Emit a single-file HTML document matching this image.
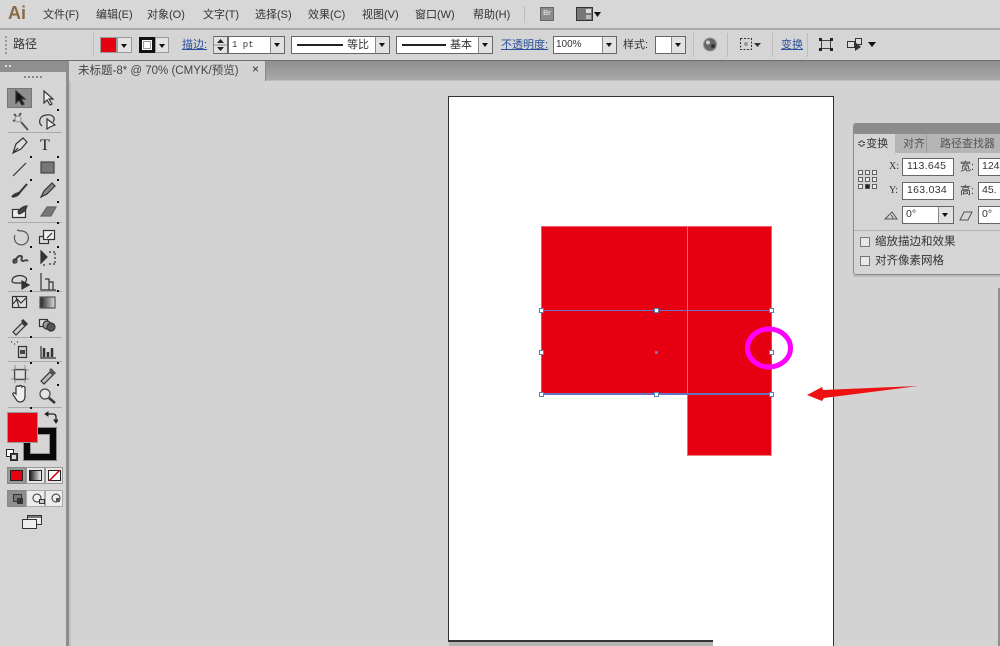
<!DOCTYPE html>
<html><head><meta charset="utf-8"><style>
html,body{margin:0;padding:0}
body{width:1000px;height:646px;overflow:hidden;position:relative;background:#d3d3d3;font-family:"Liberation Sans","Noto Sans CJK SC",sans-serif;color:#333}
.a{position:absolute}
.t{position:absolute;white-space:nowrap;font-size:11px;line-height:14px}
.f{position:absolute;background:#fff;border:1px solid #666;box-sizing:border-box}
.d{position:absolute;width:0;height:0;border-left:3.5px solid transparent;border-right:3.5px solid transparent;border-top:4px solid #111}
.btn{position:absolute;background:#e2e2e2;border:1px solid #666;box-sizing:border-box;border-left:1px solid #888}
.sep{position:absolute;width:1px;background:#bcbcbc}
.h{position:absolute;width:5px;height:5px;background:#fff;border:1px solid #5a7fb5;box-sizing:border-box}
.hs{position:absolute;height:1px;background:#aaa;left:8px;width:54px}
</style></head><body>

<!-- menu bar -->
<div class="a" style="left:0;top:0;width:1000px;height:28px;background:#d7d7d7"></div>
<div class="a" style="left:0;top:28px;width:1000px;height:2px;background:#a9a9a9"></div>
<div class="t" style="left:8px;top:3px;font-size:18px;line-height:20px;font-weight:bold;color:#8a6a48">Ai</div>
<div class="t" style="left:43px;top:8px">文件(F)</div>
<div class="t" style="left:96px;top:8px">编辑(E)</div>
<div class="t" style="left:147px;top:8px">对象(O)</div>
<div class="t" style="left:203px;top:8px">文字(T)</div>
<div class="t" style="left:255px;top:8px">选择(S)</div>
<div class="t" style="left:308px;top:8px">效果(C)</div>
<div class="t" style="left:362px;top:8px">视图(V)</div>
<div class="t" style="left:415px;top:8px">窗口(W)</div>
<div class="t" style="left:473px;top:8px">帮助(H)</div>
<div class="sep" style="left:524px;top:6px;height:17px"></div>
<div class="a" style="left:540px;top:7px;width:14px;height:14px;background:#8b8b8b;border:1px solid #666;box-sizing:border-box;font-size:7px;line-height:12px;text-align:center;color:#ddd;font-weight:bold">Br</div>
<svg class="a" style="left:576px;top:7px" width="26" height="15"><rect x="0.5" y="0.5" width="16" height="13" fill="#777" stroke="#333"/><rect x="10" y="2" width="5" height="4" fill="#ddd"/><rect x="10" y="8" width="5" height="4" fill="#bbb"/><path d="M18 5h7l-3.500 5z" fill="#111"/></svg>

<!-- control bar -->
<div class="a" style="left:0;top:30px;width:1000px;height:30px;background:#d5d5d5"></div>
<div class="a" style="left:0;top:60px;width:1000px;height:1px;background:#6f6f6f"></div>
<div class="a" style="left:5px;top:36px;width:2px;height:18px;border-left:2px dotted #999"></div>
<div class="t" style="left:13px;top:37px;font-size:12px">路径</div>
<div class="sep" style="left:93px;top:33px;height:24px"></div>
<div class="a" style="left:100px;top:37px;width:17px;height:16px;background:#e60012;border:1px solid #999;box-sizing:border-box"></div>
<div class="btn" style="left:117px;top:37px;width:15px;height:16px;border-color:#999"></div><div class="d" style="left:121px;top:44px"></div>
<div class="a" style="left:139px;top:37px;width:16px;height:16px;background:#fff;border:3px solid #111;box-sizing:border-box;outline:1px solid #999;outline-offset:-5px"></div>
<div class="btn" style="left:155px;top:37px;width:14px;height:16px;border-color:#999"></div><div class="d" style="left:159px;top:44px"></div>
<div class="t" style="left:182px;top:38px;color:#2a4f9a;text-decoration:underline">描边:</div>
<div class="btn" style="left:213px;top:36px;width:15px;height:18px"></div>
<svg class="a" style="left:213px;top:36px" width="15" height="18"><path d="M4 7l3.500-4 3.500 4zM4 11l3.500 4 3.500-4z" fill="#222"/><path d="M1 9h13" stroke="#888"/></svg>
<div class="f" style="left:228px;top:36px;width:57px;height:18px"></div>
<div class="t" style="left:232px;top:38px;font-family:'Liberation Mono',monospace;font-size:9px">1 pt</div>
<div class="btn" style="left:270px;top:36px;width:15px;height:18px"></div><div class="d" style="left:274px;top:43px"></div>
<div class="f" style="left:291px;top:36px;width:85px;height:18px"></div>
<div class="a" style="left:297px;top:44px;width:46px;height:2px;background:#222"></div>
<div class="t" style="left:347px;top:38px">等比</div>
<div class="btn" style="left:375px;top:36px;width:15px;height:18px"></div><div class="d" style="left:379px;top:43px"></div>
<div class="f" style="left:396px;top:36px;width:83px;height:18px"></div>
<div class="a" style="left:402px;top:44px;width:44px;height:2px;background:#222"></div>
<div class="t" style="left:450px;top:38px">基本</div>
<div class="btn" style="left:478px;top:36px;width:15px;height:18px"></div><div class="d" style="left:482px;top:43px"></div>
<div class="t" style="left:501px;top:38px;color:#2a4f9a;text-decoration:underline">不透明度:</div>
<div class="f" style="left:553px;top:36px;width:50px;height:18px"></div>
<div class="t" style="left:556px;top:38px;font-size:10px">100%</div>
<div class="btn" style="left:602px;top:36px;width:15px;height:18px"></div><div class="d" style="left:606px;top:43px"></div>
<div class="t" style="left:623px;top:38px">样式:</div>
<div class="f" style="left:655px;top:36px;width:17px;height:18px"></div>
<div class="btn" style="left:671px;top:36px;width:15px;height:18px"></div><div class="d" style="left:675px;top:43px"></div>
<div class="sep" style="left:693px;top:33px;height:24px"></div>
<svg class="a" style="left:702px;top:36px" width="16" height="17"><circle cx="8" cy="8.500" r="6.500" fill="#666" stroke="#999"/><circle cx="6" cy="6.500" r="2" fill="#ccc"/><circle cx="11" cy="10" r="2" fill="#333"/></svg>
<div class="sep" style="left:727px;top:33px;height:24px"></div>
<svg class="a" style="left:738px;top:36px" width="26" height="16"><rect x="2.500" y="2.500" width="11" height="11" fill="none" stroke="#333" stroke-dasharray="2 1.500"/><circle cx="8" cy="8" r="2" fill="#999"/><path d="M16 7h7l-3.500 4z" fill="#333"/></svg>
<div class="sep" style="left:772px;top:33px;height:24px"></div>
<div class="t" style="left:781px;top:38px;color:#2a4f9a;text-decoration:underline">变换</div>
<div class="sep" style="left:807px;top:33px;height:24px"></div>
<svg class="a" style="left:818px;top:37px" width="16" height="15"><rect x="3.500" y="3.500" width="9" height="8" fill="none" stroke="#444"/><path d="M1 1h3v3H1zM12 1h3v3h-3zM1 11h3v3H1zM12 11h3v3h-3z" fill="#222"/></svg>
<svg class="a" style="left:846px;top:36px" width="32" height="17"><rect x="1.500" y="5.500" width="7" height="6" fill="#ddd" stroke="#333"/><rect x="9.500" y="2.500" width="6" height="6" fill="#ddd" stroke="#333"/><path d="M9 6l6 5-6 4z" fill="#333"/><path d="M22 6h8l-4 5z" fill="#111"/></svg>

<!-- tab bar -->
<div class="a" style="left:0;top:61px;width:1000px;height:19px;background:linear-gradient(#8e8e8e,#a9a9a9)"></div>
<div class="a" style="left:0;top:80px;width:1000px;height:1px;background:#bdbdbd"></div>
<div class="a" style="left:68px;top:61px;width:198px;height:20px;background:#d3d3d3;border-right:1px solid #888;box-sizing:border-box"></div>
<div class="t" style="left:78px;top:64px;font-size:11.500px;color:#444">未标题-8* @ 70% (CMYK/预览)</div>
<div class="t" style="left:252px;top:62px;font-size:12px;color:#333">×</div>

<!-- tool panel -->
<div class="a" style="left:0;top:61px;width:66px;height:585px;background:#d5d5d5"></div>
<div class="a" style="left:0;top:61px;width:66px;height:11px;background:#8f8f8f"></div>
<div class="a" style="left:5px;top:65px;width:6px;height:2px;border-top:2px dotted #ddd"></div>
<div class="a" style="left:24px;top:76px;width:18px;border-top:2px dotted #888"></div>
<div class="a" style="left:66px;top:61px;width:3px;height:585px;background:#8d8d8d"></div>
<div class="a" style="left:69px;top:81px;width:2px;height:565px;background:#c2c2c2"></div>

<div class="a" style="left:7px;top:88px;width:25px;height:20px;background:#8f8f8f;border:1px solid #777;box-sizing:border-box"></div>
<div class="hs" style="top:132px"></div><div class="hs" style="top:222px"></div><div class="hs" style="top:291px"></div><div class="hs" style="top:337px"></div><div class="hs" style="top:361px"></div><div class="hs" style="top:407px"></div>
<svg class="a" style="left:0;top:84px" width="66" height="450" fill="none" stroke="#333" stroke-width="1.200">
<path d="M16 7l0 12 3-3 3 5 2-1-3-5 4 0z" fill="#111"/>
<path d="M44 7l0 12 3-3 3 5 2-1-3-5 4 0z" fill="#eee"/>
<path d="M14 30l2 2M21 29l-2 3M13 37l3-1M21 38l7 8" stroke="#555" stroke-width="2"/><circle cx="18" cy="35" r="3" fill="#ddd" stroke="#999"/>
<path d="M42 42c-4-3-3-10 4-11 7-1 10 3 7 7" /><path d="M47 35v10l3-2 5-2z" fill="#eee"/>
<path d="M13 69l3-9 7-6 4 4-6 7z" fill="#ddd"/><path d="M13 69l5-5"/>
<text x="40" y="66" font-family="Liberation Serif" font-size="16" fill="#222" stroke="none">T</text>
<path d="M13 92l13-13"/><rect x="41" y="78" width="13" height="11" fill="#777" stroke="#444"/>
<path d="M12 113c4-5 7-3 8-5l7-8" stroke-width="2"/><path d="M12 113c3 0 6-1 8-4" fill="#333"/>
<path d="M41 113l3-6 8-8 3 3-8 8z" fill="#888"/>
<rect x="12.500" y="125.500" width="13" height="8" fill="#eee"/><path d="M18 128c2-4 6-6 9-6-1 4-4 7-8 8z" fill="#444"/>
<path d="M41 132l6-9h9l-5 9z" fill="#777" stroke="#666"/>
<path d="M15 151a7 7 0 1 0 5-4l-3-1" stroke="#555"/>
<rect x="39.500" y="152.500" width="9" height="7" fill="#ddd"/><rect x="43.500" y="146.500" width="11" height="9" fill="#eee"/><path d="M47 154l5-5"/>
<path d="M13 179c3-2 4-8 8-7 3 1-2 4 2 5 2 0 3-2 5 0" stroke-width="2" stroke="#444"/><circle cx="15" cy="177" r="2"/>
<path d="M41 167v12l6-6z" fill="#333"/><path d="M49 168h7M49 180h7M55 169v10M43 181h2" stroke-dasharray="2 2"/>
<path d="M12 197c0-5 8-7 13-4 3 2 1 6-2 6H16c-3 0-4-1-4-2z" /><path d="M22 197v8l7-4z" fill="#333"/>
<path d="M41 189v17h15M45 195h4v11M49 198h4v8"/>
<rect x="12.500" y="212.500" width="14" height="11" fill="#ddd"/><path d="M13 220l4-5 4 4 5-5M16 213l3 10"/>
<rect x="40" y="213" width="15" height="11" fill="url(#g)" stroke="#555"/>
<path d="M13 248l9-9 3 3-9 9z" fill="#ccc"/><path d="M22 236l5 5" stroke-width="3"/>
<rect x="39.500" y="235.500" width="8" height="7" fill="#ddd"/><circle cx="47" cy="241" r="4" fill="#999"/><circle cx="51" cy="243" r="4" fill="#555"/>
<rect x="18.500" y="262.500" width="8" height="11" fill="#ccc"/><rect x="20" y="266" width="5" height="4" fill="#444" stroke="none"/><path d="M11 258h2M14 260h2M17 258h2" stroke-dasharray="1 1"/>
<path d="M41 262v12h15" /><path d="M44 264v9M48 268v5M52 264v9" stroke-width="2.500"/>
<rect x="14.500" y="285.500" width="11" height="10" fill="#ddd"/><path d="M11 286h18M11 295h18M15 281v18M25 281v18" stroke="#777" stroke-width=".7"/>
<path d="M41 297l9-9 3 3-9 9z" fill="#bbb"/><path d="M50 285l5 5" stroke-width="3" stroke="#555"/>
<path d="M14 312c-3-3 0-4 2-2v-7c1-2 3-1 3 0 0-2 3-2 3 0 1-1 3-1 3 1v8c0 4-2 6-5 6s-4-3-6-6z" fill="#eee"/>
<circle cx="45" cy="310" r="5" fill="#e4e4e4" stroke="#444"/><path d="M49 314l6 5" stroke-width="2.500" stroke="#333"/>
<path d="M57 25h2v2h-2zM30 72h2v2h-2zM57 72h2v2h-2zM30 95h2v2h-2zM57 95h2v2h-2zM57 117h2v2h-2zM57 138h2v2h-2zM30 162h2v2h-2zM57 162h2v2h-2zM30 184h2v2h-2zM30 206h2v2h-2zM57 206h2v2h-2zM30 252h2v2h-2zM30 278h2v2h-2zM57 278h2v2h-2zM57 300h2v2h-2zM30 323h2v2h-2z" fill="#111" stroke="none"/>
<defs><linearGradient id="g"><stop offset="0" stop-color="#222"/><stop offset="1" stop-color="#ddd"/></linearGradient></defs>
</svg>

<!-- fill / stroke -->
<div class="a" style="left:24px;top:428px;width:32px;height:32px;box-sizing:border-box;border:6px solid #0a0a0a;outline:1px solid #888;background:#d5d5d5"></div>
<div class="a" style="left:30px;top:434px;width:20px;height:20px;box-sizing:border-box;border:1px solid #999"></div>
<div class="a" style="left:7px;top:412px;width:31px;height:31px;background:#e60012;border:1px solid #999;box-sizing:border-box"></div>
<svg class="a" style="left:44px;top:410px" width="14" height="14" fill="none" stroke="#222"><path d="M2 4h7c2 0 3 1 3 3v5" stroke-width="1.300"/><path d="M1 4l3-2v4zM12 13l-2-3h4z" fill="#222"/></svg>
<svg class="a" style="left:6px;top:449px" width="12" height="12"><rect x="0.500" y="0.500" width="7" height="7" fill="#fff" stroke="#222"/><rect x="4.500" y="4.500" width="7" height="7" fill="#444" stroke="#222"/><rect x="6" y="6" width="4" height="4" fill="#ddd"/></svg>

<div class="a" style="left:7px;top:467px;width:19px;height:17px;background:#9a9a9a;border:1px solid #888;box-sizing:border-box"></div>
<div class="a" style="left:10px;top:470px;width:13px;height:11px;background:#e60012;border:1px solid #222;box-sizing:border-box"></div>
<div class="a" style="left:26px;top:467px;width:19px;height:17px;background:#e5e5e5;border:1px solid #999;box-sizing:border-box"></div>
<div class="a" style="left:29px;top:470px;width:13px;height:11px;background:linear-gradient(90deg,#222,#eee);border:1px solid #222;box-sizing:border-box"></div>
<div class="a" style="left:45px;top:467px;width:18px;height:17px;background:#e5e5e5;border:1px solid #999;box-sizing:border-box"></div>
<svg class="a" style="left:48px;top:470px" width="13" height="11"><rect x="0.500" y="0.500" width="12" height="10" fill="#fff" stroke="#222"/><path d="M1 11L12 0" stroke="#c00" stroke-width="1.500"/></svg>

<div class="a" style="left:7px;top:490px;width:19px;height:17px;background:#8f8f8f;border:1px solid #888;box-sizing:border-box"></div>
<div class="a" style="left:26px;top:490px;width:19px;height:17px;background:#ececec;border:1px solid #aaa;box-sizing:border-box"></div>
<div class="a" style="left:45px;top:490px;width:18px;height:17px;background:#ececec;border:1px solid #aaa;box-sizing:border-box"></div>
<svg class="a" style="left:7px;top:490px" width="56" height="17" fill="none" stroke="#333"><rect x="6.500" y="4.500" width="8" height="7" fill="#777"/><rect x="10.500" y="8.500" width="5" height="5" fill="#333"/><circle cx="30" cy="8" r="4" fill="#eee"/><rect x="32.500" y="9.500" width="5" height="4" fill="#ccc"/><circle cx="49" cy="8" r="4" fill="#eee"/><path d="M49 8h4v4h-4z" fill="#555" stroke="none"/></svg>
<svg class="a" style="left:21px;top:514px" width="22" height="16" fill="#eee" stroke="#333"><rect x="6.500" y="1.500" width="14" height="9"/><rect x="1.500" y="5.500" width="14" height="9"/><path d="M7 2h13v2H7z" fill="#777" stroke="none"/></svg>

<!-- artboard -->
<div class="a" style="left:448px;top:96px;width:386px;height:546px;background:#fff;border:1px solid #333;box-sizing:border-box;border-bottom-width:2px"></div>
<div class="a" style="left:713px;top:640px;width:120px;height:6px;background:#fff"></div>
<div class="a" style="left:833px;top:96px;width:1px;height:550px;background:#333"></div>
<div class="a" style="left:449px;top:642px;width:264px;height:4px;background:#b5b5b5"></div>

<!-- shapes -->
<div class="a" style="left:541px;top:226px;width:231px;height:169px;background:#e60012"></div>
<div class="a" style="left:687px;top:226px;width:85px;height:230px;background:#e60012;border-left:1px solid #ee6a72;border-right:1px solid #f0a0a5;border-bottom:1px solid #ee8088;box-sizing:border-box"></div>
<div class="a" style="left:541px;top:226px;width:231px;height:1px;background:#ee5a64"></div>
<div class="a" style="left:541px;top:226px;width:1px;height:85px;background:#ee5a64"></div>
<div class="a" style="left:771px;top:226px;width:1px;height:85px;background:#ee6a72"></div>

<!-- selection -->
<div class="a" style="left:541px;top:310px;width:231px;height:85px;border:1px solid #6a70c0;box-sizing:border-box;border-bottom-width:2px"></div>
<div class="h" style="left:539px;top:308px"></div><div class="h" style="left:654px;top:308px"></div><div class="h" style="left:769px;top:308px"></div>
<div class="h" style="left:539px;top:350px"></div><div class="h" style="left:769px;top:350px"></div>
<div class="h" style="left:539px;top:392px"></div><div class="h" style="left:654px;top:392px"></div><div class="h" style="left:769px;top:392px"></div>
<div class="a" style="left:655px;top:351px;width:3px;height:3px;background:#8a6ab0"></div>

<svg class="a" style="left:740px;top:320px" width="60" height="56"><ellipse cx="29" cy="28" rx="21.500" ry="19" fill="none" stroke="#ff00ff" stroke-width="5"/></svg>
<svg class="a" style="left:800px;top:380px" width="120" height="26"><path d="M7 15L22 7l1 3L118 6 24 18l-2 3z" fill="#ee1111"/></svg>

<!-- transform panel -->
<div class="a" style="left:853px;top:123px;width:147px;height:152px;background:#d5d5d5;border:1px solid #8a8a8a;border-right:0;box-sizing:border-box;border-radius:3px 0 0 3px"></div>
<div class="a" style="left:854px;top:124px;width:146px;height:10px;background:#8c8c8c;border-radius:2px 0 0 0"></div>
<div class="a" style="left:854px;top:134px;width:146px;height:19px;background:#b5b5b5"></div>
<div class="a" style="left:854px;top:134px;width:41px;height:19px;background:#d5d5d5"></div>
<div class="a" style="left:926px;top:135px;width:1px;height:18px;background:#999"></div>
<div class="t" style="left:857px;top:137px;font-size:11px">≎变换</div>
<div class="t" style="left:903px;top:137px;color:#555">对齐</div>
<div class="t" style="left:940px;top:137px;color:#555">路径查找器</div>
<svg class="a" style="left:858px;top:170px" width="19" height="19" fill="#eee" stroke="#444" stroke-width=".8"><rect x=".5" y=".5" width="4" height="4"/><rect x="7.500" y=".5" width="4" height="4"/><rect x="14.500" y=".5" width="4" height="4"/><rect x=".5" y="7.500" width="4" height="4"/><rect x="7.500" y="7.500" width="4" height="4"/><rect x="14.500" y="7.500" width="4" height="4"/><rect x=".5" y="14.500" width="4" height="4"/><rect x="7.500" y="14.500" width="4" height="4" fill="#222"/><rect x="14.500" y="14.500" width="4" height="4"/></svg>
<div class="t" style="left:889px;top:160px;font-family:'Liberation Serif',serif;font-size:10px">X:</div>
<div class="f" style="left:902px;top:158px;width:52px;height:18px;font-size:10.500px;line-height:15px;padding-left:4px;letter-spacing:.3px">113.645</div>
<div class="t" style="left:960px;top:160px">宽:</div>
<div class="f" style="left:978px;top:158px;width:30px;height:18px;font-size:10.500px;line-height:15px;padding-left:3px">124</div>
<div class="t" style="left:889px;top:184px;font-family:'Liberation Serif',serif;font-size:10px">Y:</div>
<div class="f" style="left:902px;top:182px;width:52px;height:18px;font-size:10.500px;line-height:15px;padding-left:4px;letter-spacing:.3px">163.034</div>
<div class="t" style="left:960px;top:184px">高:</div>
<div class="f" style="left:978px;top:182px;width:30px;height:18px;font-size:10.500px;line-height:15px;padding-left:3px">45.</div>
<svg class="a" style="left:884px;top:209px" width="15" height="12" fill="none" stroke="#555"><path d="M1 10h12L8 3z"/><path d="M7 6c1 1 2 2 2 4"/></svg>
<div class="f" style="left:902px;top:206px;width:52px;height:18px;font-size:10.500px;line-height:15px;padding-left:3px">0°</div>
<div class="btn" style="left:938px;top:206px;width:16px;height:18px"></div><div class="d" style="left:942px;top:213px"></div>
<svg class="a" style="left:959px;top:210px" width="16" height="11" fill="none" stroke="#555"><path d="M1 10l4-8h8l-4 8z"/></svg>
<div class="f" style="left:978px;top:206px;width:30px;height:18px;font-size:10.500px;line-height:15px;padding-left:3px">0°</div>
<div class="a" style="left:854px;top:230px;width:146px;height:1px;background:#b0b0b0"></div>
<div class="a" style="left:860px;top:237px;width:10px;height:10px;background:#e8e8e8;border:1px solid #777;box-sizing:border-box"></div>
<div class="t" style="left:875px;top:235px;font-size:11.500px">缩放描边和效果</div>
<div class="a" style="left:860px;top:256px;width:10px;height:10px;background:#e8e8e8;border:1px solid #777;box-sizing:border-box"></div>
<div class="t" style="left:875px;top:254px;font-size:11.500px">对齐像素网格</div>
<div class="a" style="left:853px;top:275px;width:147px;height:2px;background:#bcbcbc"></div>
<div class="a" style="left:998px;top:288px;width:2px;height:358px;background:#8f8f8f"></div>

</body></html>
